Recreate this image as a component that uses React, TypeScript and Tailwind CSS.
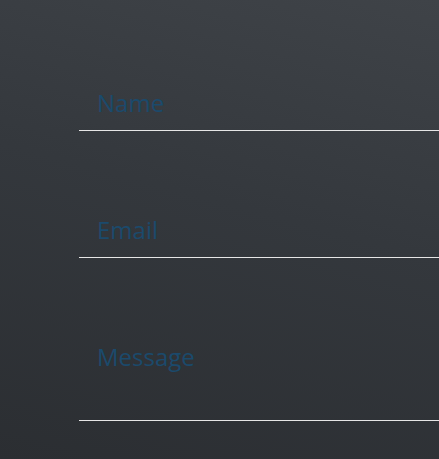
export default function App() {
  return (
    <div className="h-[459px] w-[439px] overflow-hidden bg-[linear-gradient(195deg,#3f4348_0%,#34383d_45%,#2b2e32_100%)] font-['Open_Sans',sans-serif]">
      <form className="flex flex-col gap-[71px] pt-[75px] pl-[79px]">
        <input
          type="text"
          placeholder="Name"
          className="h-[56px] w-[400px] border-b border-[#e6e6e6] bg-transparent px-[18px] text-[24px] text-white outline-none placeholder:text-[#1b4a6c]"
        />
        <input
          type="email"
          placeholder="Email"
          className="h-[56px] w-[400px] border-b border-[#e6e6e6] bg-transparent px-[18px] text-[24px] text-white outline-none placeholder:text-[#1b4a6c]"
        />
        <textarea
          placeholder="Message"
          className="h-[92px] w-[400px] resize-none border-b border-[#e6e6e6] bg-transparent px-[18px] pt-[11px] text-[24px] leading-[33px] text-white outline-none placeholder:text-[#1b4a6c]"
        />
      </form>
    </div>
  );
}
